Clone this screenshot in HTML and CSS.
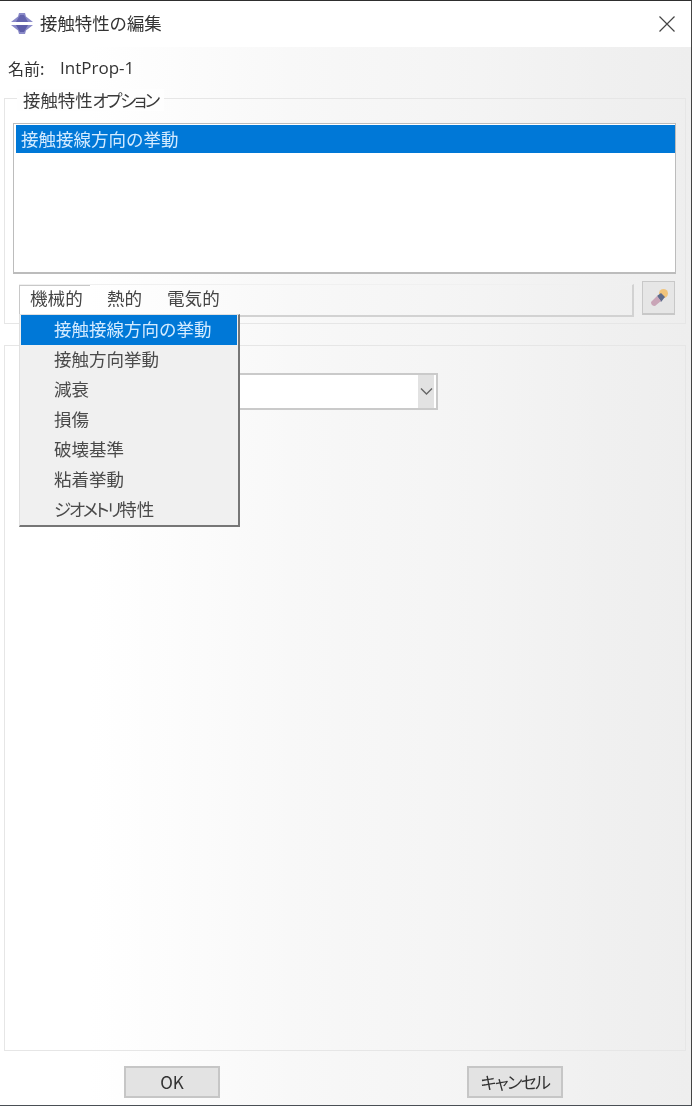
FILE: index.html
```html
<!DOCTYPE html>
<html lang="ja">
<head>
<meta charset="utf-8">
<title>接触特性の編集</title>
<link rel="stylesheet" href="styles.css">
</head>
<body>
<div class="window">
  <header class="titlebar">
    <svg class="app-icon" width="24" height="24" viewBox="0 0 24 24">
      <path d="M1 10 L8 4.5 L9 1 H15 L16 4.5 L23 10 Z" fill="#8a8ac8"/>
      <path d="M6 10 L10 3 H14 L18 10 Z" fill="#6464ae"/>
      <path d="M1 13 H23 L16 18.5 L15 22 H9 L8 18.5 Z" fill="#8a8ac8"/>
      <path d="M6 13 H18 L14 20 H10 Z" fill="#5d5da8"/>
    </svg>
    <span class="title">接触特性の編集</span>
    <svg class="close" width="16" height="16" viewBox="0 0 16 16">
      <path d="M0.5 0.5 L15.5 15.5 M15.5 0.5 L0.5 15.5" stroke="#444" stroke-width="1.2" fill="none"/>
    </svg>
  </header>
  <main class="content">
    <div class="name-row"><span class="name-label">名前:</span><span class="name-value">IntProp-1</span></div>
    <section class="group options">
      <span class="legend">接触特性<span class="kana">オプション</span></span>
      <div class="listbox"><div class="list-row">接触接線方向の挙動</div></div>
      <div class="tools">
        <nav class="tabbar">
          <span class="tab tab-active">機械的</span>
          <span class="tab">熱的</span>
          <span class="tab">電気的</span>
        </nav>
        <button class="erase" type="button" aria-label="削除">
          <svg width="22" height="22" viewBox="0 0 22 22">
            <circle cx="15.5" cy="6.5" r="4.5" fill="#f0c47c"/>
            <path d="M9 9 L13 6 L17 10 L13 15 Z" fill="#5d6b8c"/>
            <path d="M3 15 L9 9 L13 14 L7 19 Q3 19 3 15 Z" fill="#c9a5b7"/>
          </svg>
        </button>
      </div>
      <div class="menu">
        <div class="menu-item menu-item-active">接触接線方向の挙動</div>
        <div class="menu-item">接触方向挙動</div>
        <div class="menu-item">減衰</div>
        <div class="menu-item">損傷</div>
        <div class="menu-item">破壊基準</div>
        <div class="menu-item">粘着挙動</div>
        <div class="menu-item"><span class="kana">ジオメトリ</span>特性</div>
      </div>
    </section>
    <section class="group detail">
      <div class="select">
        <span class="select-arrow">
          <svg width="13" height="9" viewBox="0 0 13 9"><path d="M1 1.5 L6.5 7 L12 1.5" stroke="#666" stroke-width="1.4" fill="none"/></svg>
        </span>
      </div>
    </section>
    <footer class="actions">
      <button class="btn" type="button">OK</button>
      <button class="btn" type="button"><span class="kana kana-button">キャンセル</span></button>
    </footer>
  </main>
</div>
</body>
</html>
```
FILE: styles.css
```css
* { box-sizing: border-box; }
html, body { margin: 0; padding: 0; }
body {
  width: 692px;
  height: 1106px;
  overflow: hidden;
  font-family: "Noto Sans CJK JP", "Noto Sans", sans-serif;
  color: #333;
  background: #fff;
}
.window {
  width: 692px;
  height: 1106px;
  display: flex;
  flex-direction: column;
  border-top: 1px solid #2e2e2e;
  border-right: 1px solid #444;
  border-bottom: 1px solid #4a4f55;
  filter: blur(0.35px);
}
.titlebar {
  height: 46px;
  flex: none;
  display: flex;
  align-items: center;
  padding: 0 16px 0 10px;
  background: #fff;
}
.app-icon { flex: none; margin-right: 6px; }
.title { font-size: 17.4px; line-height: 44px; height: 46px; color: #333; }
.close { margin-left: auto; }
.content {
  flex: 1;
  min-height: 0;
  display: flex;
  flex-direction: column;
  padding: 0 5px 0 4px;
  background: linear-gradient(90deg, #fff 0, #fff 90px, #f8f8f8 290px, #f4f4f4 480px, #f0f0f0 600px, #eeeeee 100%);
}
.name-row {
  height: 51px;
  flex: none;
  display: flex;
  align-items: center;
  padding: 0 0 10px 4px;
  font-size: 16px;
}
.name-label { width: 52px; }
.name-value { font-family: "Open Sans", sans-serif; font-size: 17px; }
.kana { font-feature-settings: "palt"; letter-spacing: -2.2px; }
.kana-button { letter-spacing: -1.6px; }
.group {
  position: relative;
  flex: none;
  border: 1px solid #e6e6e6;
}
.options {
  height: 226px;
  padding: 24px 9px 0 8px;
}
.legend {
  position: absolute;
  left: 12px;
  top: -10px;
  padding: 0 6px;
  font-size: 17.4px;
  line-height: 22px;
  background: #fefefe;
  color: #3a3a3a;
  white-space: nowrap;
}
.listbox {
  height: 151px;
  background: #fff;
  border: 1px solid #bcbcbc;
  border-bottom-width: 2px;
  padding: 1px 0 0 2px;
}
.list-row {
  height: 28px;
  background: #0078d7;
  color: #d4ebff;
  font-size: 17.5px;
  line-height: 28px;
  padding-left: 5px;
}
.tools {
  display: flex;
  align-items: flex-start;
  margin-top: 7px;
  padding-left: 6px;
}
.tabbar {
  width: 615px;
  height: 33px;
  margin-top: 3px;
  display: flex;
  align-items: center;
  border-right: 2px solid #d2d2d2;
  border-bottom: 2px solid #d2d2d2;
  border-top: 1px solid #f0f0f0;
}
.tab {
  font-size: 17.6px;
  line-height: 24px;
  height: 28px;
  padding: 0 0 0 17px;
  width: 71px;
  color: #444;
  white-space: nowrap;
}
.tab + .tab { width: 60px; }
.tab-active {
  padding-left: 10px;
  height: 30px;
  margin-top: -1px;
  border-left: 1px solid #c8c8c8;
  border-top: 1px solid #c8c8c8;
}
.erase {
  width: 33px;
  height: 34px;
  margin-left: 8px;
  padding: 0;
  display: flex;
  align-items: center;
  justify-content: center;
  background: #e6e6e6;
  border: 1px solid #c8c8c8;
  border-bottom-width: 2px;
}
.menu {
  position: absolute;
  left: 14px;
  top: 215px;
  width: 221px;
  height: 213px;
  z-index: 2;
  padding: 0 1px;
  background: #f0f0f0;
  border: 1px solid #e0e0e0;
  border-right: 2px solid #767676;
  border-bottom: 2px solid #767676;
}
.menu-item {
  height: 30px;
  line-height: 27px;
  padding-left: 33px;
  font-size: 17.5px;
  color: #4a4a4a;
  white-space: nowrap;
}
.menu-item-active {
  background: #0078d7;
  color: #d4ebff;
}
.detail {
  margin-top: 21px;
  height: 706px;
  padding-top: 27px;
}
.select {
  position: relative;
  width: 319px;
  height: 37px;
  margin-left: 114px;
  background: #fff;
  border: 2px solid #cacaca;
}
.select-arrow {
  position: absolute;
  right: 2px;
  top: 0;
  bottom: 0;
  width: 16px;
  display: flex;
  align-items: center;
  justify-content: center;
  background: #e2e2e2;
}
.actions {
  flex: 1;
  display: flex;
  justify-content: space-between;
  align-items: flex-start;
  padding: 15px 123px 0 120px;
}
.btn {
  width: 96px;
  height: 32px;
  padding: 0;
  font-family: "Noto Sans CJK JP", sans-serif;
  font-size: 17px;
  line-height: 26px;
  color: #333;
  background: #e3e3e3;
  border: 2px solid #c6c6c6;
}
```
